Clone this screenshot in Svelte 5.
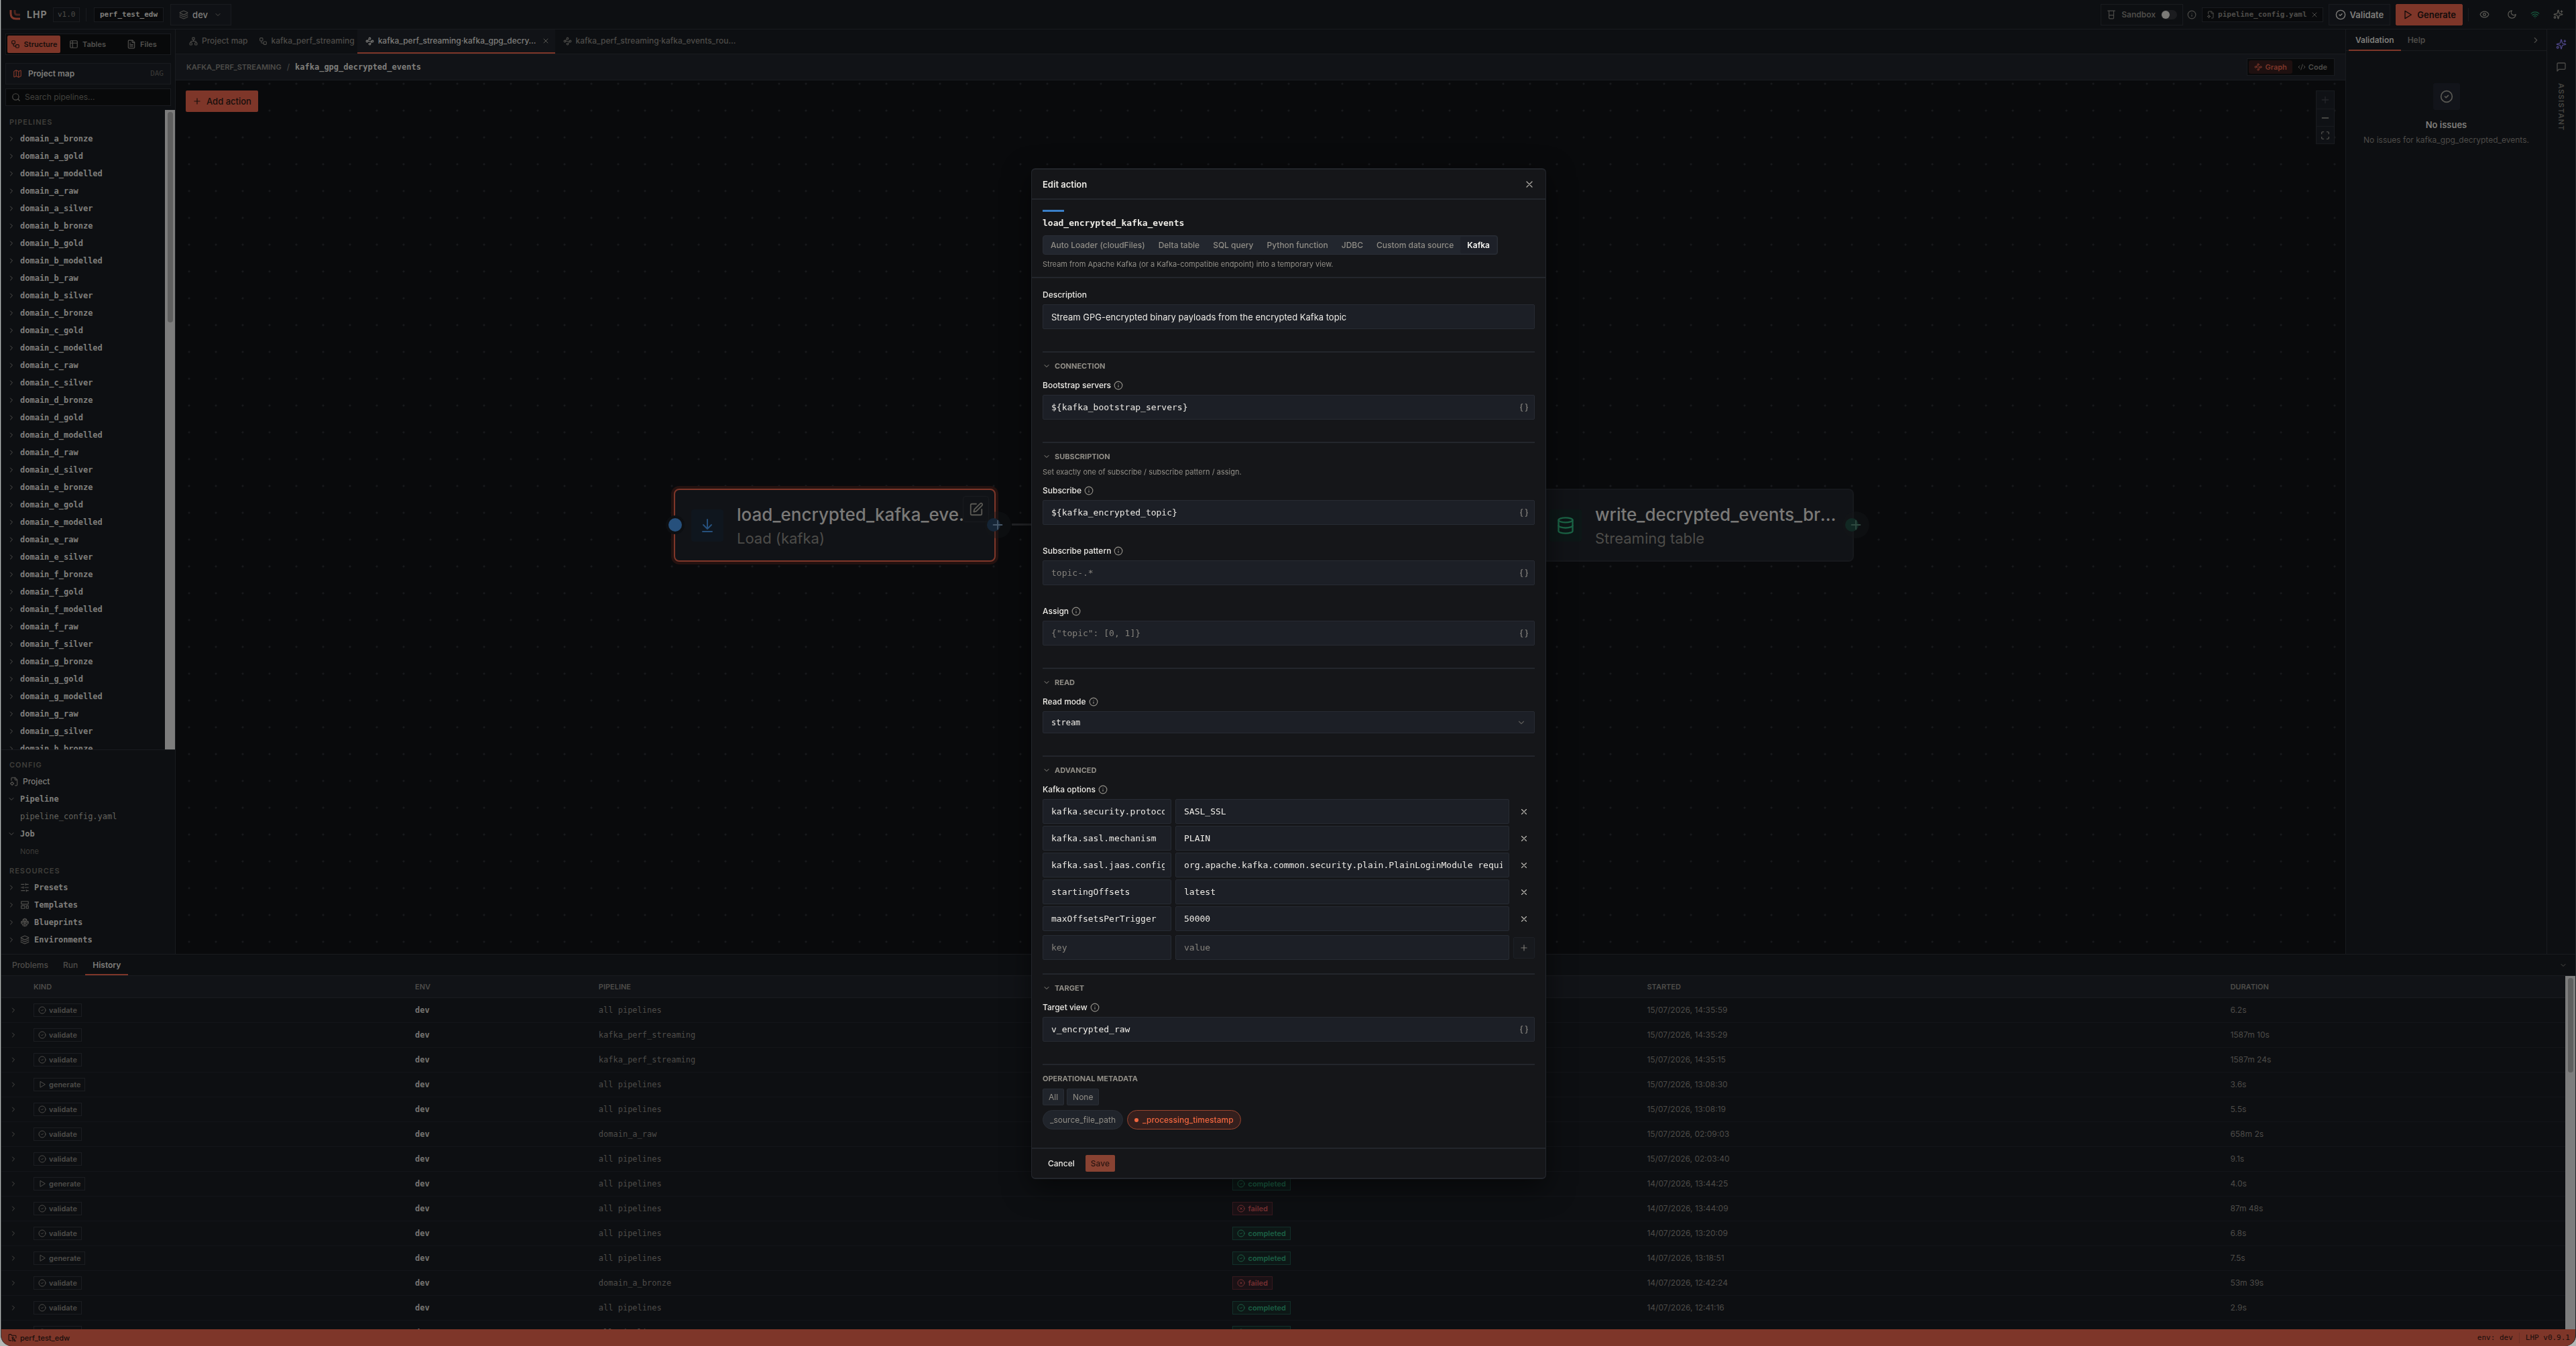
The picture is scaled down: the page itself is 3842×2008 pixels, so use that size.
<script>
  const icons = {
    layers: '<path d="M12.8 2.2a2 2 0 0 0-1.6 0L2.6 6.1a1 1 0 0 0 0 1.8l8.6 3.9a2 2 0 0 0 1.6 0l8.6-3.9a1 1 0 0 0 0-1.8z"/><path d="M2 12a1 1 0 0 0 .6.9l8.6 3.9a2 2 0 0 0 1.6 0l8.6-3.9A1 1 0 0 0 22 12"/><path d="M2 17a1 1 0 0 0 .6.9l8.6 3.9a2 2 0 0 0 1.6 0l8.6-3.9A1 1 0 0 0 22 17"/>',
    workflow: '<rect x="3" y="3" width="8" height="8" rx="2"/><path d="M7 11v4a2 2 0 0 0 2 2h4"/><rect x="13" y="13" width="8" height="8" rx="2"/>',
    table: '<path d="M9 3H5a2 2 0 0 0-2 2v4m6-6h10a2 2 0 0 1 2 2v4M9 3v18m0 0h10a2 2 0 0 0 2-2V9M9 21H5a2 2 0 0 1-2-2V9m0 0h18"/>',
    file: '<path d="M15 2H6a2 2 0 0 0-2 2v16a2 2 0 0 0 2 2h12a2 2 0 0 0 2-2V7z"/><path d="M14 2v4a2 2 0 0 0 2 2h4M10 9H8M16 13H8M16 17H8"/>',
    map: '<path d="M14.1 5.6a2 2 0 0 0 1.8 0l3.7-1.9A1 1 0 0 1 21 4.6v12.8a1 1 0 0 1-.6.9l-4.5 2.3a2 2 0 0 1-1.8 0l-4.2-2.1a2 2 0 0 0-1.8 0l-3.7 1.8A1 1 0 0 1 3 19.4V6.6a1 1 0 0 1 .6-.9l4.5-2.3a2 2 0 0 1 1.8 0z"/><path d="M15 5.8v15M9 3.2v15"/>',
    search: '<circle cx="11" cy="11" r="8"/><path d="m21 21-4.3-4.3"/>',
    right: '<path d="m9 18 6-6-6-6"/>',
    down: '<path d="m6 9 6 6 6-6"/>',
    x: '<path d="M18 6 6 18M6 6l12 12"/>',
    plus: '<path d="M5 12h14M12 5v14"/>',
    minus: '<path d="M5 12h14"/>',
    expand: '<path d="M8 3H5a2 2 0 0 0-2 2v3M21 8V5a2 2 0 0 0-2-2h-3M3 16v3a2 2 0 0 0 2 2h3M16 21h3a2 2 0 0 0 2-2v-3"/>',
    check: '<circle cx="12" cy="12" r="10"/><path d="m9 12 2 2 4-4"/>',
    fail: '<circle cx="12" cy="12" r="10"/><path d="m15 9-6 6M9 9l6 6"/>',
    play: '<path d="M6 3.5v17L20 12z"/>',
    eye: '<path d="M2 12.3a1 1 0 0 1 0-.7 10.8 10.8 0 0 1 20 0 1 1 0 0 1 0 .7 10.8 10.8 0 0 1-20 0"/><circle cx="12" cy="12" r="3"/>',
    moon: '<path d="M12 3a6 6 0 0 0 9 9 9 9 0 1 1-9-9"/>',
    wifi: '<path d="M12 20h.01M2 8.8a15 15 0 0 1 20 0M5 12.9a10 10 0 0 1 14 0M8.5 16.4a5 5 0 0 1 7 0"/>',
    sparkles: '<path d="M9.9 15.5A2 2 0 0 0 8.5 14l-6.1-1.5a.5.5 0 0 1 0-1L8.5 10A2 2 0 0 0 9.9 8.5l1.6-6.1a.5.5 0 0 1 1 0L14 8.5A2 2 0 0 0 15.5 10l6.1 1.5a.5.5 0 0 1 0 1L15.5 14a2 2 0 0 0-1.5 1.5l-1.5 6.1a.5.5 0 0 1-1 0z"/><path d="M20 3v4M22 5h-4"/><circle cx="4" cy="19" r="2"/>',
    message: '<path d="M21 15a2 2 0 0 1-2 2H7l-4 4V5a2 2 0 0 1 2-2h14a2 2 0 0 1 2 2z"/>',
    network: '<rect x="16" y="16" width="6" height="6" rx="1"/><rect x="2" y="16" width="6" height="6" rx="1"/><rect x="9" y="2" width="6" height="6" rx="1"/><path d="M5 16v-3a1 1 0 0 1 1-1h12a1 1 0 0 1 1 1v3M12 12V8"/>',
    waypoints: '<circle cx="12" cy="4.5" r="2.5"/><path d="m10.2 6.3-3.9 3.9"/><circle cx="4.5" cy="12" r="2.5"/><path d="M7 12h10"/><circle cx="19.5" cy="12" r="2.5"/><path d="m13.8 17.7 3.9-3.9"/><circle cx="12" cy="19.5" r="2.5"/>',
    info: '<circle cx="12" cy="12" r="10"/><path d="M12 16v-4M12 8h.01"/>',
    code: '<path d="m18 16 4-4-4-4M6 8l-4 4 4 4M14.5 4l-5 16"/>',
    edit: '<path d="M12 3H5a2 2 0 0 0-2 2v14a2 2 0 0 0 2 2h14a2 2 0 0 0 2-2v-7"/><path d="M18.4 2.6a1 1 0 0 1 3 3l-9 9a2 2 0 0 1-.9.5l-2.9.9a.5.5 0 0 1-.6-.6l.8-2.9a2 2 0 0 1 .5-.9z"/>',
    download: '<path d="M12 17V3M6 11l6 6 6-6M19 21H5"/>',
    database: '<ellipse cx="12" cy="5" rx="9" ry="3"/><path d="M3 5v14a9 3 0 0 0 18 0V5"/><path d="M3 12a9 3 0 0 0 18 0"/>',
    sliders: '<path d="M21 4h-7M10 4H3M21 12h-9M8 12H3M21 20h-5M12 20H3M14 2v4M8 10v4M16 18v4"/>',
    template: '<rect x="3" y="3" width="18" height="7" rx="1"/><rect x="3" y="14" width="9" height="7" rx="1"/><rect x="16" y="14" width="5" height="7" rx="1"/>',
    boxes: '<path d="m7 17-4-2.3v-4.4L7 8l5 2.5v4L7 17zm10 0 4-2.3v-4.4L17 8l-5 2.5v4l5 2.5zM12 10.5 7.500 8V4.200L12 2l4.500 2.200V8zM7 17v3l5 2 5-2v-3M12 14.500V22M3.500 10.500 7 12.500l5-2 5 2 3.500-2M7.500 4.500 12 6.500l4.500-2"/>',
    filecog: '<path d="M14 2v4a2 2 0 0 0 2 2h4M5 9V4a2 2 0 0 1 2-2h8l5 5v13a2 2 0 0 1-2 2h-3"/><circle cx="7" cy="17" r="3"/><path d="M7 12.5V14M7 20v1.5M2.5 17H4M10 17h1.500"/>',
    folder: '<path d="M9 20H4a2 2 0 0 1-2-2V5a2 2 0 0 1 2-2h4l2 3h10a2 2 0 0 1 2 2v5"/><circle cx="13" cy="12" r="2"/><path d="M13 14v8M18 15v7M18 19c-3 0-5-2-5-5M21 21h-3"/>',
    jar: '<path d="M3 2h18M6 2v18a2 2 0 0 0 2 2h8a2 2 0 0 0 2-2V2M6 13h12"/>',
    braces: '<path d="M8 3H7a2 2 0 0 0-2 2v5a2 2 0 0 1-2 2 2 2 0 0 1 2 2v5a2 2 0 0 0 2 2h1M16 21h1a2 2 0 0 0 2-2v-5a2 2 0 0 1 2-2 2 2 0 0 1-2-2V5a2 2 0 0 0-2-2h-1"/>'
  };

  const layersOf = ['bronze', 'gold', 'modelled', 'raw', 'silver'];
  const pipelines = ['a', 'b', 'c', 'd', 'e', 'f', 'g', 'h'].flatMap((d) => layersOf.map((l) => `domain_${d}_${l}`)).slice(0, 36);
  const resources = [['sliders', 'Presets'], ['template', 'Templates'], ['boxes', 'Blueprints'], ['layers', 'Environments']];
  const fileTabs = [
    { icon: 'network', label: 'Project map' },
    { icon: 'workflow', label: 'kafka_perf_streaming' },
    { icon: 'waypoints', label: 'kafka_perf_streaming·kafka_gpg_decry…', active: true },
    { icon: 'waypoints', label: 'kafka_perf_streaming·kafka_events_rou…' }
  ];
  const runs = [
    ['validate', 'all pipelines', 'completed', '15/07/2026, 14:35:59', '6.2s'],
    ['validate', 'kafka_perf_streaming', 'completed', '15/07/2026, 14:35:29', '1587m 10s'],
    ['validate', 'kafka_perf_streaming', 'completed', '15/07/2026, 14:35:15', '1587m 24s'],
    ['generate', 'all pipelines', 'completed', '15/07/2026, 13:08:30', '3.6s'],
    ['validate', 'all pipelines', 'completed', '15/07/2026, 13:08:19', '5.5s'],
    ['validate', 'domain_a_raw', 'failed', '15/07/2026, 02:09:03', '658m 2s'],
    ['validate', 'all pipelines', 'completed', '15/07/2026, 02:03:40', '9.1s'],
    ['generate', 'all pipelines', 'completed', '14/07/2026, 13:44:25', '4.0s'],
    ['validate', 'all pipelines', 'failed', '14/07/2026, 13:44:09', '87m 48s'],
    ['validate', 'all pipelines', 'completed', '14/07/2026, 13:20:09', '6.8s'],
    ['generate', 'all pipelines', 'completed', '14/07/2026, 13:18:51', '7.5s'],
    ['validate', 'domain_a_bronze', 'failed', '14/07/2026, 12:42:24', '53m 39s'],
    ['validate', 'all pipelines', 'completed', '14/07/2026, 12:41:16', '2.9s'],
    ['validate', 'all pipelines', 'completed', '14/07/2026, 12:40:02', '3.1s']
  ];
  const sources = ['Auto Loader (cloudFiles)', 'Delta table', 'SQL query', 'Python function', 'JDBC', 'Custom data source', 'Kafka'];
  const options = [
    ['kafka.security.protocol', 'SASL_SSL'],
    ['kafka.sasl.mechanism', 'PLAIN'],
    ['kafka.sasl.jaas.config', 'org.apache.kafka.common.security.plain.PlainLoginModule required'],
    ['startingOffsets', 'latest'],
    ['maxOffsetsPerTrigger', '50000']
  ];
</script>

{#snippet icon(name, size = 14)}
  <svg class="icon" width={size} height={size} viewBox="0 0 24 24" aria-hidden="true">{@html icons[name]}</svg>
{/snippet}

{#snippet section(title)}
  <button class="section-title" type="button">{@render icon('down', 12)}{title}</button>
{/snippet}

{#snippet field(id, label, value, placeholder)}
  <div class="field">
    <label class="label" for={id}>{label}{@render icon('info', 14)}</label>
    <div class="input-wrap">
      <input class="input mono" {id} {value} {placeholder} />
      <button class="brace" type="button" aria-label="Insert variable">{@render icon('braces', 14)}</button>
    </div>
  </div>
{/snippet}

<div class="app">
  <header class="topbar">
    <div class="brand">
      <svg class="logo" width="18" height="18" viewBox="0 0 18 18" aria-hidden="true">
        <path class="logo-main" d="M2 2v5q0 8 8 8h6" />
        <path class="logo-dim" d="M8 2v3q0 4 4 4h4" />
      </svg>
      <strong>LHP</strong>
    </div>
    <span class="chip version mono">v1.0</span>
    <span class="rule"></span>
    <span class="chip project mono">perf_test_edw</span>
    <button class="env" type="button">{@render icon('layers', 14)}<span>dev</span>{@render icon('down', 12)}</button>
    <div class="spacer"></div>
    <label class="sandbox">{@render icon('jar', 14)}<span>Sandbox</span><input class="switch" type="checkbox" role="switch" /></label>
    <span class="muted hint">{@render icon('info', 14)}</span>
    <span class="chip config mono">{@render icon('filecog', 12)}pipeline_config.yaml<button class="bare" type="button" aria-label="Clear config">{@render icon('x', 12)}</button></span>
    <button class="validate" type="button">{@render icon('check', 16)}Validate</button>
    <button class="generate" type="button">{@render icon('play', 16)}Generate</button>
    <span class="rule"></span>
    <div class="tools">
      <button class="bare" type="button" aria-label="Preview">{@render icon('eye', 15)}</button>
      <button class="bare" type="button" aria-label="Theme">{@render icon('moon', 15)}</button>
      <span class="online">{@render icon('wifi', 14)}</span>
      <button class="bare" type="button" aria-label="Assistant">{@render icon('sparkles', 15)}</button>
    </div>
  </header>

  <div class="main">
    <aside class="sidebar">
      <div class="side-top">
        <div class="modes">
          <button class="mode on" type="button">{@render icon('workflow', 14)}Structure</button>
          <button class="mode" type="button">{@render icon('table', 14)}Tables</button>
          <button class="mode" type="button">{@render icon('file', 14)}Files</button>
        </div>
        <button class="map-btn" type="button">{@render icon('map', 14)}<span>Project map</span><small class="mono">DAG</small></button>
        <label class="search">{@render icon('search', 14)}<input type="search" placeholder="Search pipelines..." aria-label="Search pipelines" /></label>
      </div>
      <div class="tree-wrap">
        <nav class="tree">
          <h2 class="caps">Pipelines</h2>
          {#each pipelines as p}
            <button class="node-row mono" type="button">{@render icon('right', 12)}{p}</button>
          {/each}
        </nav>
        <div class="scroll"><div class="thumb tree-thumb"></div></div>
      </div>
      <nav class="side-bottom">
        <h2 class="caps">Config</h2>
        <button class="node-row plain" type="button">{@render icon('filecog', 14)}Project</button>
        <button class="node-row mono" type="button">{@render icon('down', 12)}Pipeline</button>
        <button class="node-row mono leaf" type="button">pipeline_config.yaml</button>
        <button class="node-row mono" type="button">{@render icon('down', 12)}Job</button>
        <div class="node-row empty">None</div>
        <h2 class="caps second">Resources</h2>
        {#each resources as [ic, label]}
          <button class="node-row mono" type="button">{@render icon('right', 12)}{@render icon(ic, 14)}{label}</button>
        {/each}
      </nav>
    </aside>

    <main class="work">
      <div class="tabs">
        {#each fileTabs as t}
          <button class="tab" class:active={t.active} type="button">
            {@render icon(t.icon, 13)}<span>{t.label}</span>
            {#if t.active}<i class="tab-x">{@render icon('x', 12)}</i>{/if}
          </button>
        {/each}
      </div>
      <div class="crumbs">
        <span class="crumb-root">KAFKA_PERF_STREAMING</span><span class="slash">/</span><span class="crumb mono">kafka_gpg_decrypted_events</span>
        <div class="spacer"></div>
        <div class="views">
          <button class="view on" type="button">{@render icon('waypoints', 12)}Graph</button>
          <button class="view" type="button">{@render icon('code', 12)}Code</button>
        </div>
      </div>
      <div class="canvas">
        <button class="add" type="button">{@render icon('plus', 14)}Add action</button>
        <div class="zoomer">
          <button type="button" aria-label="Zoom in" disabled>{@render icon('plus', 16)}</button>
          <button type="button" aria-label="Zoom out">{@render icon('minus', 16)}</button>
          <button type="button" aria-label="Fit view">{@render icon('expand', 14)}</button>
        </div>
        <div class="edge"></div>
        <div class="gnode load">
          <span class="port"></span>
          <span class="gicon">{@render icon('download', 24)}</span>
          <div class="gtext"><b>load_encrypted_kafka_events</b><span>Load (kafka)</span></div>
          <button class="gedit" type="button" aria-label="Edit action">{@render icon('edit', 22)}</button>
          <span class="dot"></span>
          <button class="gplus" type="button" aria-label="Add after">{@render icon('plus', 22)}</button>
        </div>
        <div class="gnode write">
          <span class="gicon">{@render icon('database', 28)}</span>
          <div class="gtext"><b>write_decrypted_events_bronze</b><span>Streaming table</span></div>
          <span class="dot"></span>
          <button class="gplus" type="button" aria-label="Add after">{@render icon('plus', 22)}</button>
        </div>
      </div>
    </main>

    <section class="inspector">
      <div class="itabs">
        <button class="itab on" type="button">Validation</button>
        <button class="itab" type="button">Help</button>
        <div class="spacer"></div>
        <button class="bare" type="button" aria-label="Collapse">{@render icon('right', 14)}</button>
      </div>
      <div class="noissues">
        <span class="nobox">{@render icon('check', 20)}</span>
        <strong>No issues</strong>
        <p>No issues for kafka_gpg_decrypted_events.</p>
      </div>
    </section>

    <aside class="rail">
      <button class="bare violet" type="button" aria-label="Assistant">{@render icon('sparkles', 16)}</button>
      <button class="bare" type="button" aria-label="Chat">{@render icon('message', 16)}</button>
      <span class="vertical">ASSISTANT</span>
    </aside>
  </div>

  <section class="bottom">
    <div class="btabs">
      <button class="btab" type="button">Problems</button>
      <button class="btab" type="button">Run</button>
      <button class="btab on" type="button">History</button>
      <div class="spacer"></div>
      <button class="bare" type="button" aria-label="Collapse panel">{@render icon('down', 12)}</button>
    </div>
    <div class="history">
      <div class="table-clip">
        <table>
          <colgroup><col class="c0" /><col class="c1" /><col class="c2" /><col class="c3" /><col class="c4" /><col class="c5" /><col /></colgroup>
          <thead>
            <tr><th aria-label="Expand"></th><th>KIND</th><th>ENV</th><th>PIPELINE</th><th>STATUS</th><th>STARTED</th><th>DURATION</th></tr>
          </thead>
          <tbody>
            {#each runs as [kind, pipe, status, started, duration]}
              <tr>
                <td>{@render icon('right', 12)}</td>
                <td><span class="badge">{@render icon(kind === 'validate' ? 'check' : 'play', 12)}{kind}</span></td>
                <td class="mono bright">dev</td>
                <td class="mono">{pipe}</td>
                <td><span class="badge {status}">{@render icon(status === 'failed' ? 'fail' : 'check', 12)}{status}</span></td>
                <td>{started}</td>
                <td>{duration}</td>
              </tr>
            {/each}
          </tbody>
        </table>
      </div>
      <div class="scroll"><div class="thumb hist-thumb"></div></div>
    </div>
  </section>

  <footer class="status">
    {@render icon('folder', 13)}<span>perf_test_edw</span>
    <div class="spacer"></div>
    <span class="mono">env: dev</span><i class="srule"></i><span class="mono">LHP v0.9.1</span>
  </footer>
</div>

<div class="overlay">
  <form class="modal" role="dialog" aria-labelledby="dlg-title" onsubmit={(e) => e.preventDefault()}>
    <div class="mhead">
      <h1 id="dlg-title">Edit action</h1>
      <button class="bare close" type="button" aria-label="Close">{@render icon('x', 16)}</button>
    </div>
    <div class="mtype">
      <div class="accent"></div>
      <div class="mname mono">load_encrypted_kafka_events</div>
      <div class="sources">
        {#each sources as s}
          <button class="source" class:on={s === 'Kafka'} type="button">{s}</button>
        {/each}
      </div>
      <p class="help">Stream from Apache Kafka (or a Kafka-compatible endpoint) into a temporary view.</p>
    </div>
    <div class="mbody">
      <div class="field">
        <label class="label" for="desc">Description</label>
        <input class="input" id="desc" value="Stream GPG-encrypted binary payloads from the encrypted Kafka topic" />
      </div>
      <section class="group">
        {@render section('CONNECTION')}
        {@render field('boot', 'Bootstrap servers', '${kafka_bootstrap_servers}', '')}
      </section>
      <section class="group">
        {@render section('SUBSCRIPTION')}
        <p class="help">Set exactly one of subscribe / subscribe pattern / assign.</p>
        <div class="fields">
          {@render field('sub', 'Subscribe', '${kafka_encrypted_topic}', '')}
          {@render field('pat', 'Subscribe pattern', '', 'topic-.*')}
          {@render field('assign', 'Assign', '', '{"topic": [0, 1]}')}
        </div>
      </section>
      <section class="group">
        {@render section('READ')}
        <div class="field">
          <label class="label" for="mode">Read mode{@render icon('info', 14)}</label>
          <div class="input-wrap">
            <select class="input select mono" id="mode"><option>stream</option><option>batch</option></select>
            <span class="caret">{@render icon('down', 14)}</span>
          </div>
        </div>
      </section>
      <section class="group">
        {@render section('ADVANCED')}
        <div class="field">
          <div class="label">Kafka options{@render icon('info', 14)}</div>
          <div class="options">
            {#each options as [k, v]}
              <div class="option">
                <input class="input mono" value={k} aria-label="Option key" />
                <input class="input mono" value={v} aria-label="Option value" />
                <button class="bare remove" type="button" aria-label="Remove option">{@render icon('x', 14)}</button>
              </div>
            {/each}
          </div>
          <div class="option fresh">
            <input class="input mono" placeholder="key" aria-label="New option key" />
            <input class="input mono" placeholder="value" aria-label="New option value" />
            <button class="plus" type="button" aria-label="Add option">{@render icon('plus', 14)}</button>
          </div>
        </div>
      </section>
      <section class="group near">
        {@render section('TARGET')}
        {@render field('target', 'Target view', 'v_encrypted_raw', '')}
      </section>
      <section class="group">
        <h3 class="section-title">OPERATIONAL METADATA</h3>
        <div class="picks"><button class="pick" type="button">All</button><button class="pick" type="button">None</button></div>
        <div class="pills">
          <button class="pill" type="button">_source_file_path</button>
          <button class="pill on" type="button"><i></i>_processing_timestamp</button>
        </div>
      </section>
    </div>
    <div class="mfoot">
      <button class="cancel" type="button">Cancel</button>
      <button class="save" type="submit">Save</button>
    </div>
  </form>
</div>

<style>
  :global(body) { background: #b4b9b7; }
  * { box-sizing: border-box; }
  .app, .overlay { font-family: Inter, "Liberation Sans", sans-serif; font-size: 12px; line-height: 18px; }
  .app {
    --line: #191b1f; --dim: #4d4c49; --faint: #3b3a37; --text: #7f7e7b; --panel: #0d0f12; --rust: #7e3629;
    height: 100vh; margin-left: 1px; border-left: 1px solid #3b3e40; border-right: 1px solid #232629;
    border-radius: 0 0 16px 16px; overflow: hidden; display: flex; flex-direction: column;
    background: var(--panel); color: var(--dim);
  }
  button, input, select { font: inherit; color: inherit; background: none; border: 0; padding: 0; margin: 0; min-width: 0; }
  button { display: flex; align-items: center; white-space: nowrap; }
  h1, h2, h3, p { margin: 0; font: inherit; }
  .mono, .mono.input { font-family: "DejaVu Sans Mono", "Liberation Mono", monospace; }
  .icon { flex: none; fill: none; stroke: currentColor; stroke-width: 2; stroke-linecap: round; stroke-linejoin: round; display: block; }
  .spacer { flex: 1; }

  .topbar { height: 44px; flex: none; display: flex; align-items: center; padding: 0 18px 0 12px; border-bottom: 1px solid var(--line); }
  .brand { display: flex; align-items: center; gap: 8px; width: 65px; color: var(--text); font-size: 14px; letter-spacing: 1px; }
  .logo path { fill: none; stroke-width: 3; stroke: var(--rust); }
  .logo .logo-dim { stroke: #4a231d; }
  .chip { height: 22px; display: flex; align-items: center; border: 1px solid var(--line); font-size: 11px; padding: 0 6px; }
  .version { width: 40px; }
  .rule { width: 1px; height: 20px; background: var(--line); margin: 0 11px 0 9px; }
  .project { padding: 0 8px; background: #090a0c; color: var(--text); font-weight: 700; }
  .env { height: 32px; width: 91px; margin-left: 10px; padding: 0 13px 0 12px; gap: 6px; border: 1px solid var(--line); background: #0f1115; font-size: 13px; font-weight: 500; }
  .env span { color: var(--text); flex: 1; text-align: left; }
  .sandbox { height: 32px; display: flex; align-items: center; gap: 8px; padding: 0 8px 0 8px; border: 1px solid var(--line); font-weight: 600; }
  .switch { appearance: none; width: 24px; height: 14px; border-radius: 7px; background: #1b1c1f; padding: 1px; }
  .switch::before { content: ""; display: block; width: 12px; height: 12px; border-radius: 50%; background: #7c7b78; }
  .hint { margin: 0 8px 0 6px; }
  .config { gap: 5px; background: #090a0c; font-weight: 700; }
  .validate, .generate { height: 32px; gap: 6px; padding: 0 9px; margin-left: 8px; border: 1px solid var(--line); font-size: 13px; font-weight: 600; color: var(--text); background: #0f1115; }
  .generate { background: var(--rust); border-color: var(--rust); color: #120c0b; border-radius: 2px; }
  .generate + .rule { margin: 0 16px 0 8px; }
  .tools { display: flex; align-items: center; gap: 20px; color: #5a5954; }
  .tools .bare:nth-child(2) { margin-left: 6px; }
  .online { color: #17593f; }

  .main { flex: 1; min-height: 0; display: flex; }
  .sidebar { width: 260px; flex: none; display: flex; flex-direction: column; border-right: 1px solid var(--line); }
  .side-top { padding: 6px; display: flex; flex-direction: column; }
  .modes { height: 32px; display: grid; grid-template-columns: 79px 1fr 1fr; padding: 2px; border: 1px solid var(--line); background: #08090a; }
  .mode { justify-content: center; gap: 6px; font-size: 11px; font-weight: 600; color: #52514e; }
  .mode.on { background: var(--rust); color: #160e0c; border-radius: 2px; }
  .map-btn { height: 32px; margin-top: 12px; padding: 0 10px; gap: 9px; border: 1px solid var(--line); background: #0f1115; color: var(--rust); }
  .map-btn span { color: var(--text); font-weight: 600; flex: 1; text-align: left; }
  .map-btn small { color: var(--faint); font-size: 11px; }
  .search { height: 26px; margin-top: 6px; padding: 0 8px; display: flex; align-items: center; gap: 6px; border: 1px solid var(--line); background: #08090a; }
  .search input { flex: 1; }
  .search input::placeholder { color: #42413e; }
  .tree-wrap { flex: 1; min-height: 0; display: flex; }
  .tree { flex: 1; overflow: hidden; padding-top: 6px; }
  .caps { height: 24px; line-height: 24px; padding-left: 12px; font-size: 11px; font-weight: 600; letter-spacing: 1px; text-transform: uppercase; color: #3f3e3a; }
  .caps.second { margin-top: 4px; }
  .scroll { width: 15px; flex: none; background: #7d7d7d; padding: 3px 3px 0 4px; }
  .thumb { border-radius: 4px; background: #5f5f5f; }
  .tree-thumb { height: 33%; }
  .hist-thumb { height: 27%; }
  .node-row { width: 100%; height: 26px; display: flex; align-items: center; gap: 6px; padding-left: 9px; color: var(--text); }
  .node-row.mono { font-weight: 700; }
  .node-row .icon { color: #52514e; }
  .node-row.plain { padding-left: 12px; font-weight: 500; }
  .node-row.leaf { padding-left: 28px; color: #65645f; font-weight: 400; }
  .node-row.empty { padding-left: 28px; font-size: 11px; color: #3d3c39; }
  .tree .node-row, .side-bottom .node-row.mono { gap: 7px; }
  .side-bottom { flex: none; padding: 10px 0 8px; border-top: 1px solid var(--line); }

  .work { flex: 1; min-width: 0; display: flex; flex-direction: column; }
  .tabs { height: 37px; flex: none; display: flex; padding-left: 8px; border-bottom: 1px solid var(--line); }
  .tab { gap: 6px; padding: 0 4px 2px 12px; font-weight: 500; }
  .tab.active { background: #111317; box-shadow: inset 0 -2px var(--rust); color: var(--text); padding-right: 8px; }
  .tab-x { margin-left: 2px; color: #5a5954; }
  .crumbs { height: 39px; flex: none; display: flex; align-items: center; padding: 0 16px; background: #111317; border-bottom: 1px solid var(--line); }
  .crumb-root { font-size: 11px; font-weight: 600; }
  .slash { margin: 0 8px; }
  .crumb { color: var(--text); font-weight: 700; }
  .views { height: 26px; display: flex; padding: 2px; border: 1px solid var(--line); background: #08090a; }
  .view { gap: 4px; padding: 0 8px; font-size: 11px; font-weight: 600; border-radius: 3px; }
  .view.on { background: #1e1010; color: var(--rust); }
  .canvas { flex: 1; position: relative; overflow: hidden; background-color: #090a0c; background-image: radial-gradient(circle at 20px 5px, #18191c 1px, transparent 2px); background-size: 40px 40px; }
  .add { position: absolute; left: 15px; top: 15px; height: 32px; padding: 0 10px; gap: 7px; background: var(--rust); color: #160e0c; font-size: 13px; font-weight: 500; border-radius: 2px; }
  .zoomer { position: absolute; right: 16px; top: 15px; border: 1px solid var(--line); background: #0f1115; }
  .zoomer button { width: 26px; height: 26px; justify-content: center; color: #5a5954; }
  .zoomer button:disabled { color: #25262a; }
  .zoomer button + button { border-top: 1px solid var(--line); }
  .edge { position: absolute; left: 1247px; top: 661px; width: 800px; height: 3px; background: #222326; }
  .gnode { position: absolute; top: 609px; width: 480px; height: 109px; display: flex; align-items: center; gap: 20px; padding: 0 24px; border: 2px solid #16181c; border-radius: 8px; background: #111317; }
  .gnode.load { left: 743px; border-color: var(--rust); box-shadow: 0 0 0 4px #241210; }
  .gnode.write { left: 2023px; }
  .gicon { width: 48px; height: 48px; flex: none; display: grid; place-items: center; border-radius: 4px; background: #0f161e; color: #26507c; }
  .write .gicon { background: #0d1717; color: #1b6546; }
  .gtext { min-width: 0; flex: 1; padding-top: 2px; }
  .gtext b, .gtext span { display: block; overflow: hidden; text-overflow: ellipsis; white-space: nowrap; }
  .gtext b { font-size: 26px; line-height: 36px; font-weight: 500; color: #7a7977; }
  .gtext span { font-size: 22px; line-height: 34px; color: #4d4c49; }
  .port, .dot { position: absolute; top: 42px; width: 20px; height: 20px; border-radius: 50%; background: #26507c; }
  .port { left: -10px; box-shadow: 0 0 0 4px #0d0f12; }
  .dot { right: -9px; background: #16304a; }
  .write .dot { background: #10352a; }
  .gplus { position: absolute; right: -25px; top: 32px; width: 40px; height: 40px; justify-content: center; border-radius: 50%; background: #14161a66; color: #46586a; }
  .write .gplus { color: #2f4a40; }
  .gedit { position: absolute; right: 8px; top: 9px; width: 39px; height: 39px; justify-content: center; border: 1px solid var(--line); border-radius: 4px; background: #111317; color: #5a5954; }

  .inspector { width: 300px; flex: none; border-left: 1px solid var(--line); }
  .itabs { height: 32px; display: flex; align-items: center; padding: 0 9px 0 4px; border-bottom: 1px solid var(--line); }
  .itab { height: 32px; padding: 0 10px; font-weight: 600; }
  .itab.on { color: var(--text); box-shadow: inset 0 -2px var(--rust); }
  .noissues { padding-top: 48px; display: flex; flex-direction: column; align-items: center; text-align: center; }
  .nobox { width: 40px; height: 40px; display: grid; place-items: center; border-radius: 3px; background: #12141a; color: #5a5954; }
  .noissues strong { margin-top: 13px; font-size: 13px; font-weight: 600; color: var(--text); }
  .noissues p { margin-top: 5px; }
  .rail { width: 43px; flex: none; border-left: 1px solid var(--line); display: flex; flex-direction: column; align-items: center; padding-top: 14px; gap: 18px; }
  .violet { color: #4c4585; }
  .vertical { writing-mode: vertical-rl; font-size: 11px; line-height: 16px; font-weight: 600; letter-spacing: 1px; margin-top: -2px; color: #454440; }

  .bottom { height: 560px; flex: none; display: flex; flex-direction: column; border-top: 1px solid var(--line); }
  .btabs { height: 32px; flex: none; display: flex; padding: 0 12px 0 5px; border-bottom: 1px solid var(--line); }
  .btab { padding: 0 11px; font-weight: 500; }
  .btab.on { color: var(--text); box-shadow: inset 0 -2px var(--rust); font-weight: 600; }
  .history { flex: 1; min-height: 0; display: flex; }
  .table-clip { flex: 1; overflow: hidden; }
  table { width: 100%; table-layout: fixed; border-collapse: separate; border-spacing: 0; }
  .c0 { width: 36px; } .c1 { width: 14.88%; } .c2 { width: 7.16%; } .c3 { width: 24.73%; } .c4 { width: 16.16%; } .c5 { width: 22.75%; }
  th { height: 33px; padding: 0 12px; text-align: left; font-size: 11px; font-weight: 600; background: #111317; border-bottom: 1px solid var(--line); }
  td { height: 37px; padding: 0 12px; border-bottom: 1px solid #131519; white-space: nowrap; color: var(--dim); }
  td.bright { color: #757471; font-weight: 700; }
  .badge { display: inline-flex; align-items: center; gap: 4px; height: 20px; padding: 0 6px; border: 1px solid #1b1d21; font-size: 11px; font-weight: 600; vertical-align: middle; }
  .badge.completed { color: #1b5f44; border-color: #12302a; background: #0d1716; }
  .badge.failed { color: #742f31; border-color: #37191e; background: #1a1115; }
  .status { height: 25px; flex: none; display: flex; align-items: center; gap: 5px; padding: 0 8px 0 10px; background: var(--rust); color: #180e0c; font-size: 11px; font-weight: 500; }
  .srule { width: 1px; height: 16px; margin: 0 4px; background: #6b2f25; }

  .overlay {
    --edge: #23262c; --soft: #918e87; --ink: #eceae5;
    position: fixed; inset: 0 0 0 2px; padding-top: 2px; display: flex; align-items: center; justify-content: center; color: var(--ink);
  }
  .modal { width: min(768px, 100%); border: solid var(--edge); border-width: 2px 1px; border-radius: 6px; background: #151619; box-shadow: 0 12px 40px #0008; }
  .mhead { height: 45px; display: flex; align-items: center; justify-content: space-between; padding: 0 16px; border-bottom: 2px solid var(--edge); }
  .mhead h1 { font-size: 13px; font-weight: 600; }
  .close { color: #a9a6a0; }
  .mtype { padding: 15px 16px 11px; border-bottom: 2px solid var(--edge); }
  .accent { width: 32px; height: 3px; background: #3a7fc8; }
  .mname { margin-top: 8px; font-size: 13px; font-weight: 700; }
  .sources { width: max-content; max-width: 100%; height: 29px; margin-top: 9px; display: flex; padding: 1px; border: 1px solid #292d35; border-radius: 4px; background: #22262e; color: var(--soft); }
  .source { padding: 0 10px; font-weight: 500; border-radius: 3px; }
  .source.on { background: #1d2028; color: #f6f5f2; font-weight: 600; }
  .help { margin-top: 6px; font-size: 11px; line-height: 16px; color: var(--soft); }
  .mbody { padding: 16px 16px 27px; }
  .label { display: flex; align-items: center; gap: 4px; margin-bottom: 5px; font-weight: 500; }
  .label .icon { color: var(--soft); }
  .fields { display: flex; flex-direction: column; gap: 30px; }
  .input { display: block; width: 100%; height: 37px; padding: 0 9px 0 12px; font-size: 13px; border: 1px solid #272b33; border-radius: 2px; background: #1c1f26; color: var(--ink); }
  .input::placeholder { color: #85827c; opacity: 1; }
  .input-wrap { position: relative; }
  .brace, .caret { position: absolute; right: 9px; top: 0; height: 100%; display: flex; align-items: center; color: var(--soft); }
  .caret { right: 13px; color: #5b5a57; pointer-events: none; }
  .select { height: 33px; appearance: none; font-size: 12px; }
  .group { margin-top: 33px; padding-top: 11px; border-top: 2px solid var(--edge); }
  .group.near { margin-top: 20px; }
  .section-title { display: flex; gap: 6px; height: 18px; font-size: 11px; font-weight: 700; color: var(--soft); }
  .group > .field, .group > .fields { margin-top: 11px; }
  .options { display: grid; gap: 3px; }
  .option { display: grid; grid-template-columns: 192px 1fr 32px; gap: 6px; align-items: center; }
  .fresh { margin-top: 6px; }
  .remove { justify-content: center; color: #bbb8b2; }
  .plus { height: 32px; justify-content: center; border: 1px solid #1d2026; border-radius: 2px; background: #17191d; color: #7c7974; }
  .picks { display: flex; gap: 4px; margin-top: 6px; }
  .pick { height: 25px; padding: 0 8px; border: 1px solid #292d35; background: #20242b; color: var(--soft); border-radius: 2px; }
  .pills { display: flex; gap: 6px; margin-top: 7px; }
  .pill { height: 29px; padding: 0 10px; gap: 6px; border: 1px solid #292d35; border-radius: 15px; background: #20242b; color: var(--soft); }
  .pill.on { border-color: #99452f; background: #351f1d; color: #f0663f; font-weight: 500; }
  .pill i { width: 6px; height: 6px; border-radius: 50%; background: currentColor; }
  .mfoot { display: flex; gap: 8px; padding: 9px 16px; border-top: 2px solid var(--edge); font-weight: 500; }
  .cancel, .save { height: 25px; padding: 0 8px; border-radius: 2px; }
  .save { background: #884232; color: #2a1511; }
</style>
